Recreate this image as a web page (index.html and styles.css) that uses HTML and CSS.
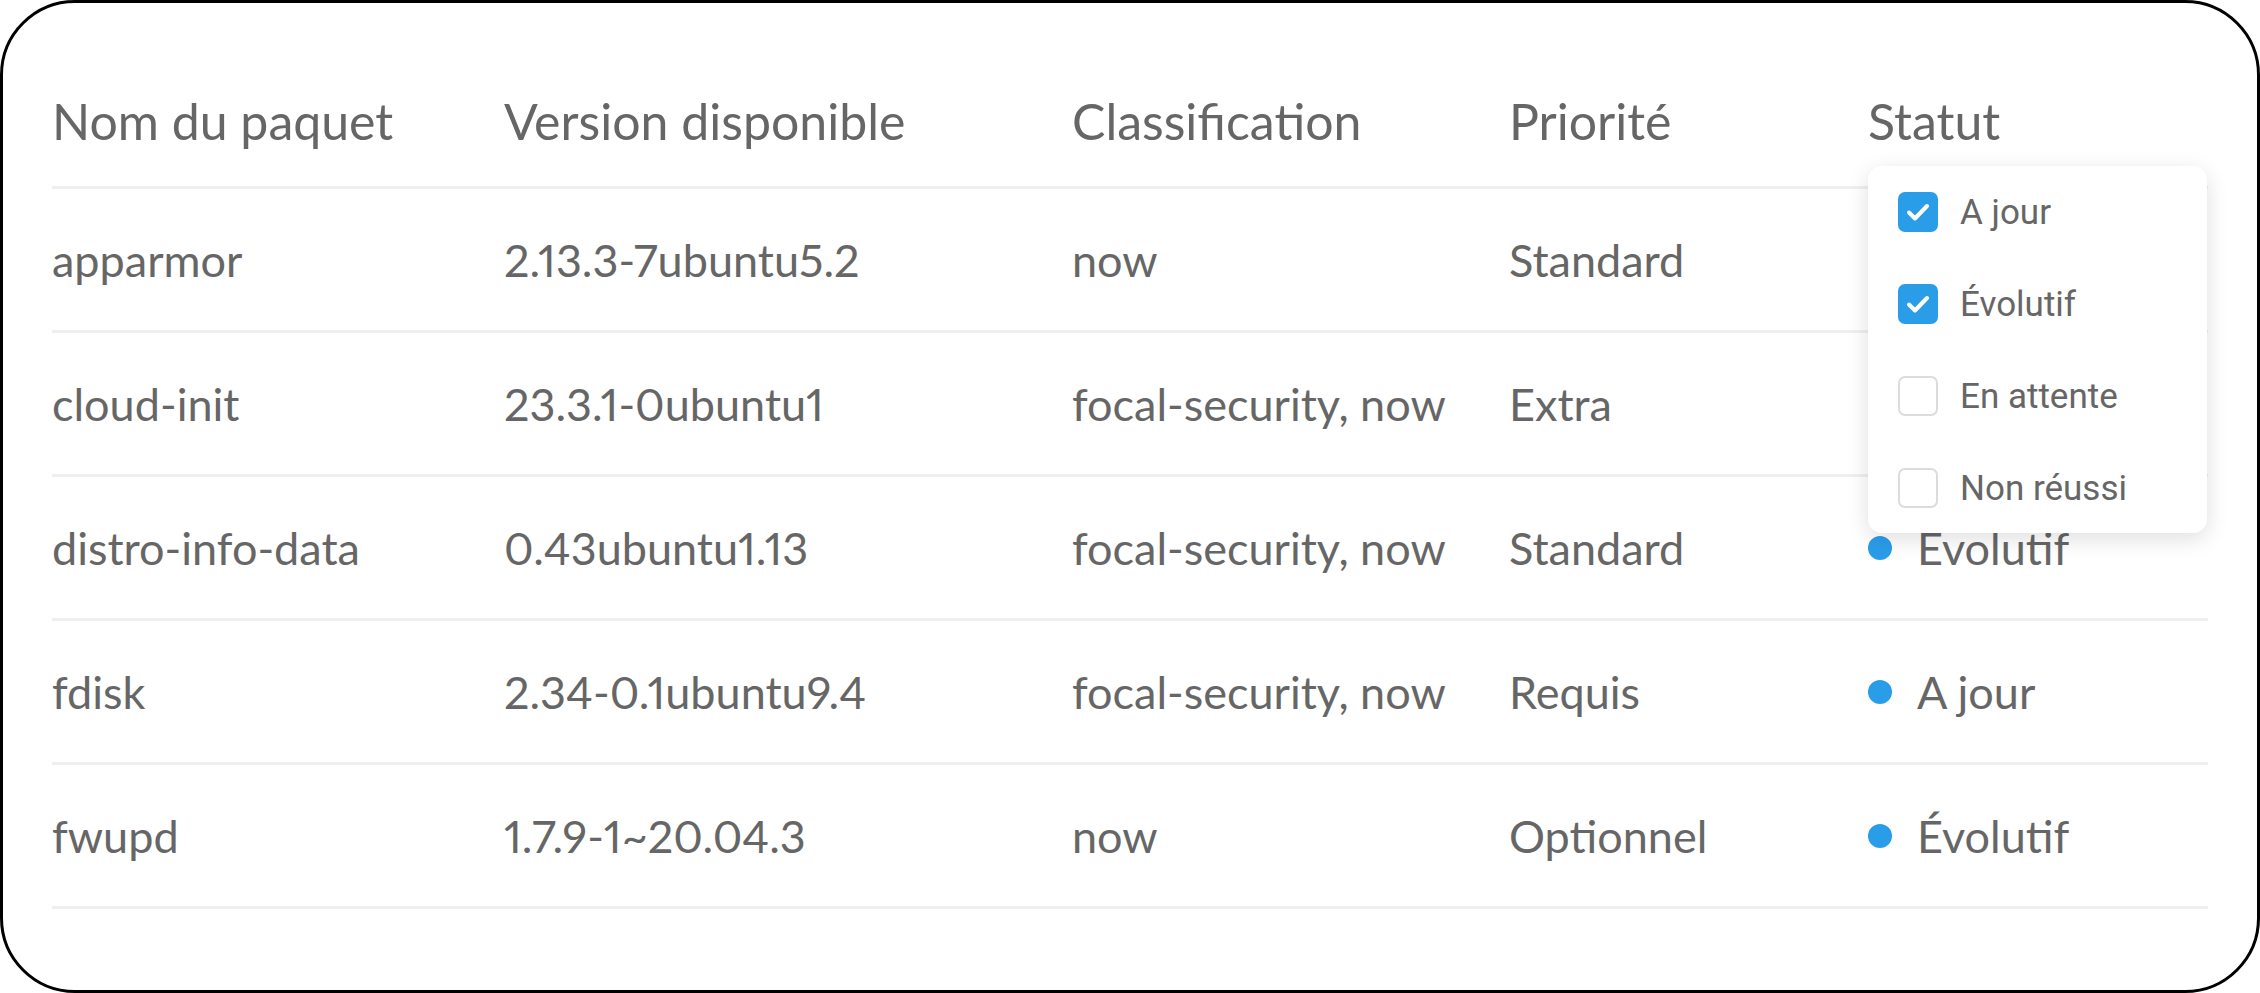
FILE: index.html
```html
<!DOCTYPE html>
<html lang="fr">
<head>
<meta charset="utf-8">
<link rel="stylesheet" href="styles.css">
</head>
<body>
<div class="frame">
  <div class="table">
    <div class="row head">
      <div class="cell">Nom du paquet</div>
      <div class="cell">Version disponible</div>
      <div class="cell">Classification</div>
      <div class="cell">Priorité</div>
      <div class="cell status-head">Statut
        <div class="menu">
          <label class="opt"><span class="box checked"><svg viewBox="0 0 40 40"><path d="M11 20.5l6 6L29 14" fill="none" stroke="#fff" stroke-width="4" stroke-linecap="round" stroke-linejoin="round"/></svg></span>A jour</label>
          <label class="opt"><span class="box checked"><svg viewBox="0 0 40 40"><path d="M11 20.5l6 6L29 14" fill="none" stroke="#fff" stroke-width="4" stroke-linecap="round" stroke-linejoin="round"/></svg></span>Évolutif</label>
          <label class="opt"><span class="box"></span>En attente</label>
          <label class="opt"><span class="box"></span>Non réussi</label>
        </div>
      </div>
    </div>
    <div class="row">
      <div class="cell">apparmor</div>
      <div class="cell">2.13.3-7ubuntu5.2</div>
      <div class="cell">now</div>
      <div class="cell">Standard</div>
      <div class="cell status"><span class="dot"></span>A jour</div>
    </div>
    <div class="row">
      <div class="cell">cloud-init</div>
      <div class="cell">23.3.1-0ubuntu1</div>
      <div class="cell">focal-security, now</div>
      <div class="cell">Extra</div>
      <div class="cell status"><span class="dot"></span>Évolutif</div>
    </div>
    <div class="row">
      <div class="cell">distro-info-data</div>
      <div class="cell">0.43ubuntu1.13</div>
      <div class="cell">focal-security, now</div>
      <div class="cell">Standard</div>
      <div class="cell status"><span class="dot"></span>Évolutif</div>
    </div>
    <div class="row">
      <div class="cell">fdisk</div>
      <div class="cell">2.34-0.1ubuntu9.4</div>
      <div class="cell">focal-security, now</div>
      <div class="cell">Requis</div>
      <div class="cell status"><span class="dot"></span>A jour</div>
    </div>
    <div class="row">
      <div class="cell">fwupd</div>
      <div class="cell">1.7.9-1~20.04.3</div>
      <div class="cell">now</div>
      <div class="cell">Optionnel</div>
      <div class="cell status"><span class="dot"></span>Évolutif</div>
    </div>
  </div>
</div>
</body>
</html>
```

FILE: styles.css
```css
* { box-sizing: border-box; }
html, body { margin: 0; padding: 0; background: #fff; }
body { font-family: Lato, "Liberation Sans", sans-serif; color: #666; font-variant-numeric: proportional-nums; }

.frame {
  width: 2260px;
  height: 993px;
  border: 3px solid #000;
  border-radius: 75px;
  padding: 53px 49px 0 49px;
  background: #fff;
  overflow: hidden;
}

.table { display: flex; flex-direction: column; }

.row {
  display: grid;
  grid-template-columns: 452px 568px 437px 359px 1fr;
  align-items: stretch;
  height: 144px;
  border-bottom: 3px solid #efefef;
  font-size: 45px;
}
.row.head { height: 133px; font-size: 50px; }

.cell { white-space: nowrap; display: flex; align-items: center; }

.status-head { position: relative; }

.status { gap: 25px; }
.dot { width: 24px; height: 24px; border-radius: 50%; background: #2a9de8; flex: none; }

.menu {
  position: absolute;
  left: 0;
  top: 110px;
  width: 339px;
  height: 367px;
  background: #fff;
  border-radius: 14px;
  box-shadow: 0 6px 22px rgba(0, 0, 0, 0.13);
  padding: 26px 30px 25px;
  display: flex;
  flex-direction: column;
  gap: 52px;
  z-index: 2;
  font-family: Roboto, "Liberation Sans", sans-serif;
  font-size: 35px;
  color: #666;
}
.opt { display: flex; align-items: center; gap: 22px; height: 40px; }
.box {
  width: 40px; height: 40px; flex: none;
  border: 2px solid #dcdcdc;
  border-radius: 7px;
  background: #fff;
  display: flex; align-items: center; justify-content: center;
}
.box.checked { background: #2a9de8; border-color: #2a9de8; }
.box svg { width: 40px; height: 40px; flex: none; }
```
